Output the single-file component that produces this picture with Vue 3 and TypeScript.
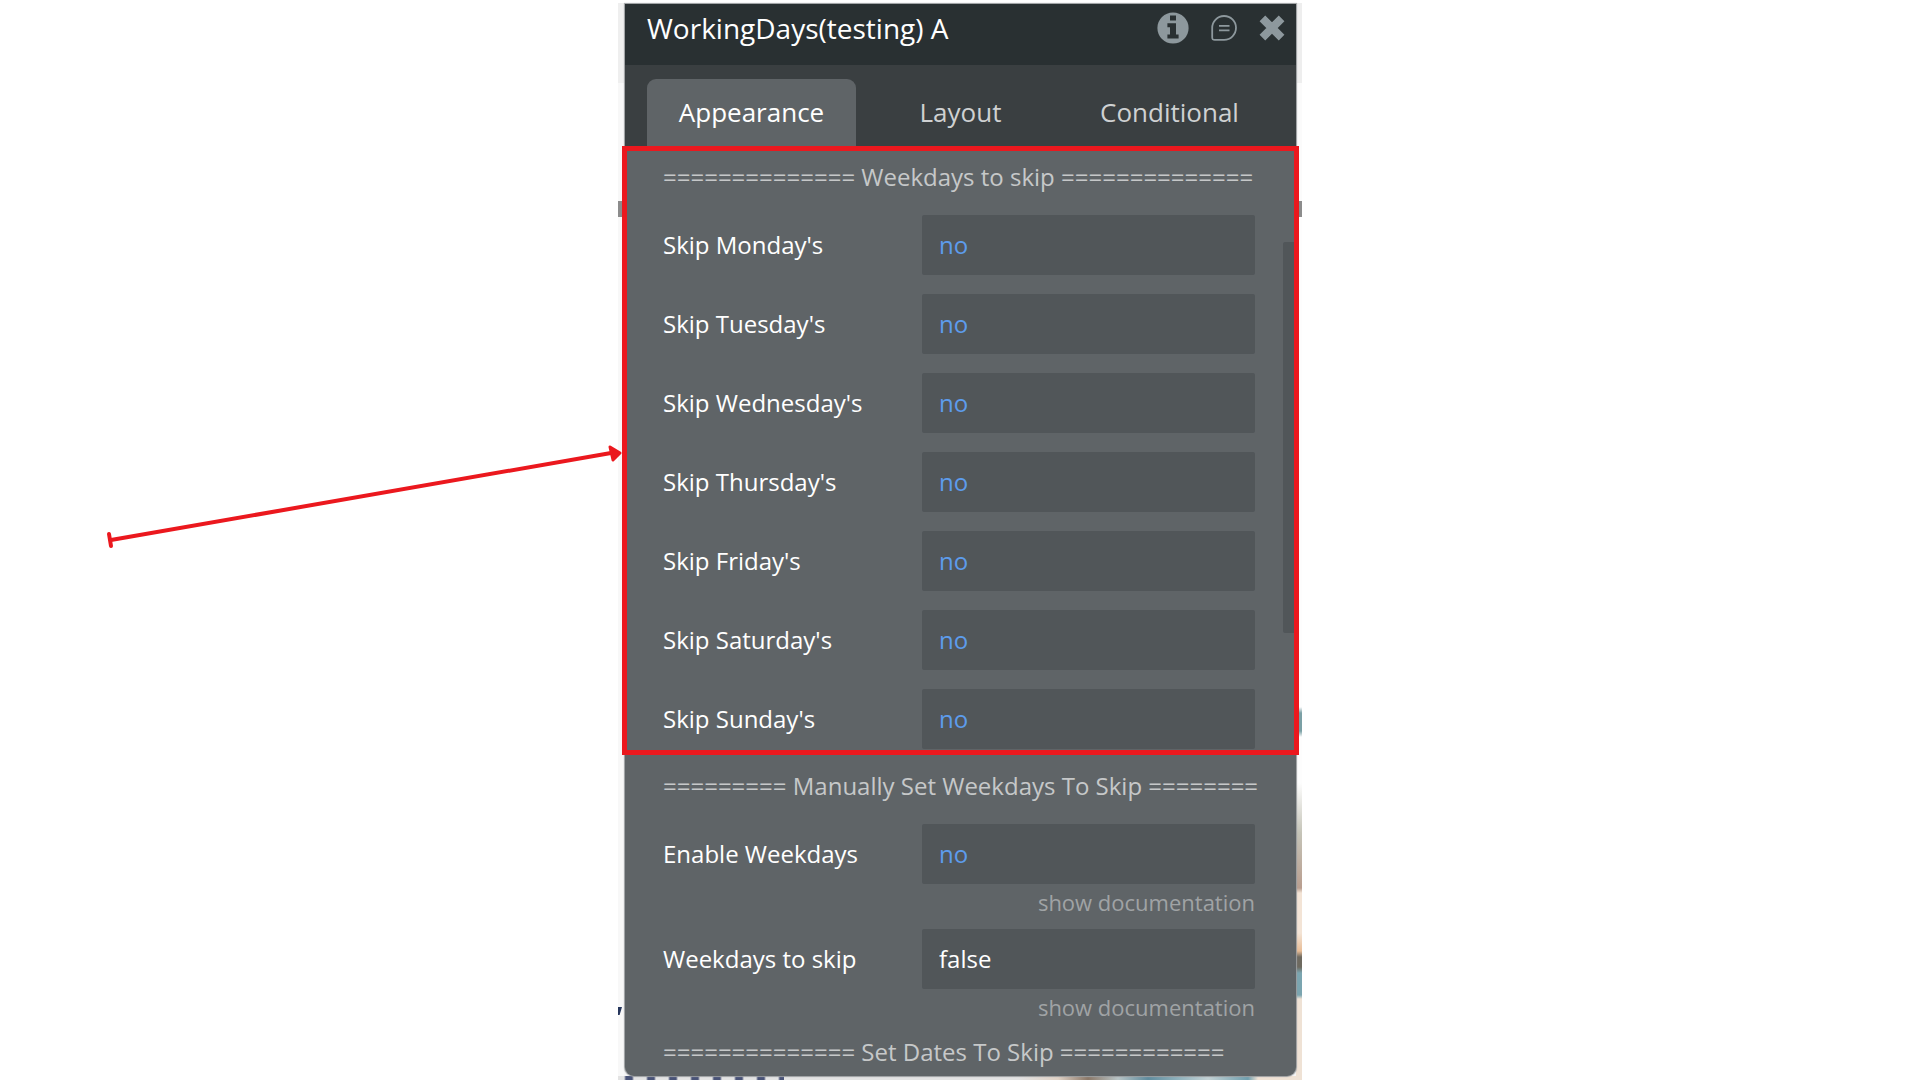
<script setup lang="ts">
import { ref } from 'vue'

interface Field {
  id: string
  label: string
  value: string
  plain?: boolean
}

const tabs = ['Appearance', 'Layout', 'Conditional']
const activeTab = ref('Appearance')

const weekdays = ref<Field[]>(
  ['Monday', 'Tuesday', 'Wednesday', 'Thursday', 'Friday', 'Saturday', 'Sunday'].map((day) => ({
    id: `skip-${day.toLowerCase()}`,
    label: `Skip ${day}'s`,
    value: 'no',
  })),
)

const manual = ref<Field[]>([
  { id: 'enable-weekdays', label: 'Enable Weekdays', value: 'no' },
  { id: 'weekdays-to-skip', label: 'Weekdays to skip', value: 'false', plain: true },
])
</script>

<template>
  <main class="page">
    <div class="backdrop">
      <i class="edge edge-left"></i>
      <i class="edge edge-right"></i>
      <i class="edge-bottom"></i>
      <section class="panel">
        <header class="header">
          <h1 class="title">WorkingDays(testing) A</h1>
          <div class="actions">
            <button type="button" class="action" aria-label="Info">
              <svg width="32" height="32" viewBox="0 0 32 32">
                <circle cx="16" cy="16" r="15.6" fill="#8d989d" />
                <path fill="#293032" d="M13 3.6h6v5h-6zM10.400 11.200h8.600v11.400h2.600v4H10.400v-4H13v-7.400h-2.600z" />
              </svg>
            </button>
            <button type="button" class="action" aria-label="Comment">
              <svg width="26" height="26" viewBox="0 0 26 26" fill="none" stroke="#8d989d">
                <path stroke-width="1.800" d="M1.200 13A11.900 11.900 0 1 1 13.100 24.800H3Q1.200 24.800 1.200 23Z" />
                <path stroke-width="1.700" d="M8 10.800h10.500M8 15.300h10.500" />
              </svg>
            </button>
            <button type="button" class="action" aria-label="Close">
              <svg width="26" height="26" viewBox="0 0 26 26" stroke="#8d989d" stroke-width="8">
                <path d="M3.400 3.400L22.600 22.600M22.600 3.400L3.400 22.600" stroke-linejoin="round" />
              </svg>
            </button>
          </div>
        </header>

        <nav class="tabs">
          <button
            v-for="tab in tabs"
            :key="tab"
            type="button"
            class="tab"
            :class="{ active: tab === activeTab }"
            @click="activeTab = tab"
          >
            {{ tab }}
          </button>
        </nav>

        <div class="group highlighted">
          <h2 class="divider">============== Weekdays to skip ==============</h2>
          <div class="rows">
            <div v-for="field in weekdays" :key="field.id" class="row">
              <label :for="field.id" class="label">{{ field.label }}</label>
              <input :id="field.id" v-model="field.value" class="input" type="text" />
            </div>
          </div>
          <i class="scroll-thumb"></i>
          <svg class="arrow" width="516" height="96" viewBox="0 0 516 96" fill="none" stroke="#eb181e" stroke-linecap="round" stroke-linejoin="round">
            <path stroke-width="4" d="M2 92L502 5" />
            <path stroke-width="4" d="M0 86L2 98" />
            <path stroke-width="3" fill="#eb181e" d="M501 -1L511 5L504 12Z" />
          </svg>
        </div>

        <div class="group">
          <h2 class="divider">========= Manually Set Weekdays To Skip ========</h2>
          <div class="rows documented">
            <div v-for="field in manual" :key="field.id" class="row">
              <label :for="field.id" class="label">{{ field.label }}</label>
              <input :id="field.id" v-model="field.value" class="input" :class="{ plain: field.plain }" type="text" />
              <a href="#" class="doc">show documentation</a>
            </div>
          </div>
        </div>

        <h2 class="divider last">============== Set Dates To Skip ============</h2>
      </section>
    </div>
  </main>
</template>

<style>
body {
  margin: 0;
  background: #fff;
}
</style>

<style scoped>
.page {
  display: flex;
  justify-content: center;
  min-height: 100vh;
  overflow: hidden;
  box-sizing: border-box;
  padding-top: 3px;
  font-family: 'Open Sans', 'Noto Sans', sans-serif;
  font-size: 24px;
  color: #fff;
}

.backdrop {
  position: relative;
  box-sizing: border-box;
  width: 684px;
  padding: 1px 6px 3px 7px;
  background: #f5f5f5;
}

.edge {
  position: absolute;
  top: 0;
  bottom: 0;
  width: 6px;
}

.edge-left {
  left: 0;
  background: linear-gradient(#efefef 80px, #f8f8f8 80px 198px, #8c8c8c 198px 214px, #f8f8f8 214px);
}

/* tip of a letter from the page behind the panel */
.edge-left::after {
  content: '';
  position: absolute;
  top: 1004px;
  left: 0;
  width: 4px;
  height: 8px;
  background: #26365c;
  clip-path: polygon(0 0, 100% 0, 40% 100%, 0 100%);
}

.edge-right {
  right: 0;
  background: linear-gradient(#eeeeee 80px, #fbfbfb 80px 198px, #8c8c8c 198px 214px, #fdfdfd 214px 704px, #7ba0a5 710px 728px, #fdfdfd 734px 780px, #c5c4b8 830px, #b99e8f 885px, #f3e4d6 890px 930px, #e8bd97 948px, #6e6a60 954px 964px, #7ba5b0 970px 992px, #efe2d5 996px);
}

.edge-bottom {
  position: absolute;
  left: 0;
  right: 0;
  bottom: 0;
  height: 4px;
  background:
    repeating-linear-gradient(90deg, transparent 0 6px, #4a5478 8px 14px, transparent 16px 22px) 0 0 / 166px 100% no-repeat,
    linear-gradient(90deg, #e3e3e3 400px, #e0d2c6 440px, #8b7868 470px, #b8c4c6 500px, #5f8c9e 530px, #8fb2bd 560px, #c4d2d5 590px, #6f9fae 630px, #efe2d5 640px);
}

.panel {
  position: relative;
  border-radius: 0 0 9px 9px;
  background: #5f6467;
  box-shadow: 0 0 1px 1px #9a9d9f;
}

.header {
  display: flex;
  justify-content: space-between;
  align-items: flex-start;
  box-sizing: border-box;
  height: 61px;
  padding: 6px 11px 0 22px;
  background: #293032;
}

.title {
  margin: 0;
  font-size: 28px;
  font-weight: 400;
  line-height: 36px;
}

.actions {
  display: flex;
  align-items: center;
  gap: 22px;
  height: 36px;
}

.action {
  display: flex;
  padding: 0;
  border: 0;
  background: none;
  cursor: pointer;
}

.action svg {
  border-radius: 4px;
}

.tabs {
  display: flex;
  height: 81px;
  box-sizing: border-box;
  padding: 14px 22px 0;
  background: #3a3f41;
}

.tab {
  flex: 1;
  padding: 0 0 2px;
  border: 0;
  border-radius: 9px 9px 0 0;
  background: none;
  color: #cfd1d2;
  font: inherit;
  font-size: 26px;
  cursor: pointer;
}

.tab.active {
  background: #5f6467;
  color: #fff;
}

.group {
  position: relative;
  padding-bottom: 6px;
}

.highlighted::after {
  content: '';
  position: absolute;
  inset: 0 -3px;
  border: 5px solid #eb181e;
  pointer-events: none;
}

.divider {
  margin: 0;
  padding: 15px 0 22px 38px;
  font-size: 24px;
  font-weight: 400;
  line-height: 32px;
  color: #c6c8c9;
  white-space: nowrap;
}

.rows {
  display: flex;
  flex-direction: column;
  gap: 19px;
  padding: 0 41px 0 38px;
}

.row {
  display: grid;
  grid-template-columns: 1fr 333px;
  align-items: center;
}

.label {
  padding-bottom: 2px;
}

.input {
  box-sizing: border-box;
  width: 100%;
  height: 60px;
  padding: 0 17px 2px;
  border: 0;
  border-radius: 2px;
  background: #515659;
  color: #5d9cec;
  font: inherit;
}

.input.plain {
  color: #fff;
}

.documented {
  gap: 8px;
}

.doc {
  grid-column: 2;
  justify-self: end;
  font-size: 22px;
  line-height: 37px;
  color: #a0a3a5;
  text-decoration: none;
}

.last {
  padding: 4px 0 8px 38px;
}

.scroll-thumb {
  position: absolute;
  top: 96px;
  right: 0;
  width: 13px;
  height: 391px;
  border-radius: 2px;
  background: #515659;
}

.arrow {
  position: absolute;
  top: 302px;
  right: 100%;
  overflow: visible;
}
</style>
